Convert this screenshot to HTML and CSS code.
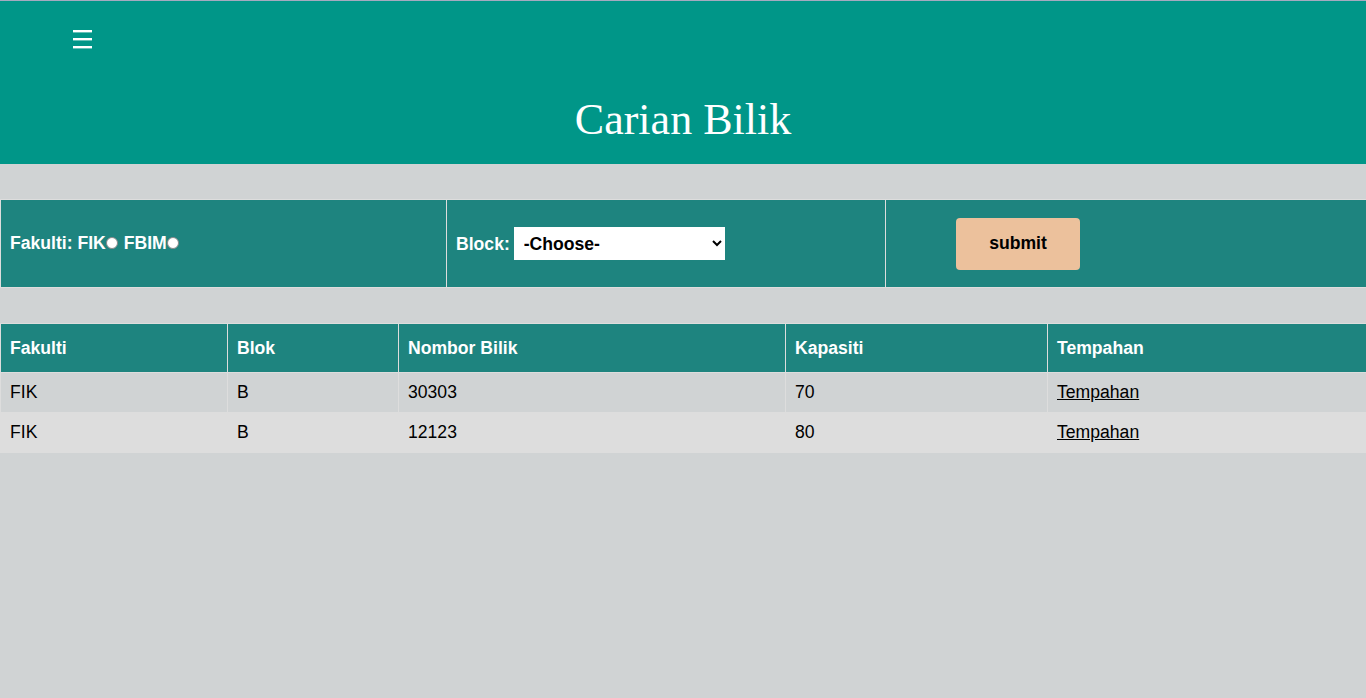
FILE: index.html
```html
<!DOCTYPE html>
<html lang="ms">
<head>
<meta charset="utf-8">
<title>Carian Bilik</title>
<link rel="stylesheet" href="styles.css">
</head>
<body>
<header class="topbar">
  <div class="menu-row">
    <svg class="menu-icon" width="19" height="19" viewBox="0 0 19 19" aria-hidden="true">
      <rect x="0" y="0" width="19" height="2.4" fill="#fff"/>
      <rect x="0" y="8" width="19" height="2.4" fill="#fff"/>
      <rect x="0" y="16" width="19" height="2.4" fill="#fff"/>
    </svg>
  </div>
  <h1 class="title">Carian Bilik</h1>
</header>

<form class="search-form">
  <table class="form-table">
    <colgroup>
      <col class="fc1"><col class="fc2"><col class="fc3">
    </colgroup>
    <tr>
      <td class="fcell">Fakulti: FIK<input class="radio" type="radio" name="fakulti" value="FIK"> FBIM<input class="radio" type="radio" name="fakulti" value="FBIM"></td>
      <td class="fcell">Block: <select class="block-select"><option>-Choose-</option><option>A</option><option>B</option></select></td>
      <td class="fcell"><button class="submit-btn" type="button">submit</button></td>
    </tr>
  </table>
</form>

<table class="data-table">
  <colgroup>
    <col class="dc1"><col class="dc2"><col class="dc3"><col class="dc4"><col class="dc5">
  </colgroup>
  <tr>
    <th>Fakulti</th><th>Blok</th><th>Nombor Bilik</th><th>Kapasiti</th><th>Tempahan</th>
  </tr>
  <tr>
    <td>FIK</td><td>B</td><td>30303</td><td>70</td><td><a href="#">Tempahan</a></td>
  </tr>
  <tr class="alt">
    <td>FIK</td><td>B</td><td>12123</td><td>80</td><td><a href="#">Tempahan</a></td>
  </tr>
</table>
</body>
</html>
```

FILE: styles.css
```css
html, body {
  margin: 0;
  padding: 0;
}

body {
  background: #d0d3d4;
  font-family: "Liberation Sans", Arial, sans-serif;
  font-size: 17.6px;
  color: #000;
  min-height: 698px;
}

.topbar {
  background: #009688;
  border-top: 1px solid #a5aac0;
  padding: 29px 0 19px;
  color: #fff;
}

.menu-row {
  display: flex;
  padding-left: 73px;
}

.menu-icon {
  display: block;
}

.title {
  margin: 46px 0 0;
  font-family: "Liberation Serif", "Times New Roman", serif;
  font-weight: normal;
  font-size: 44px;
  line-height: 50px;
  text-align: center;
}

.search-form {
  margin: 35px 0 0;
}

.form-table,
.data-table {
  width: 1366px;
  border-collapse: collapse;
  table-layout: fixed;
}

.fc1 { width: 446px; }
.fc2 { width: 439px; }
.fc3 { width: 481px; }

.fcell {
  background: #1e847f;
  border: 1px solid #dddddd;
  color: #fff;
  font-weight: bold;
  height: 87px;
  padding: 0 9px;
  vertical-align: middle;
}

.radio {
  appearance: none;
  -webkit-appearance: none;
  width: 12px;
  height: 12px;
  margin: 0 1px 0 0;
  border: 1px solid #8a8a8a;
  border-radius: 50%;
  background: #fff;
  vertical-align: 0;
  box-sizing: border-box;
}

.block-select {
  width: 211px;
  height: 33px;
  margin-left: -1px;
  padding: 0 6px;
  border: none;
  border-radius: 0;
  background-color: #fff;
  font-family: "Liberation Sans", Arial, sans-serif;
  font-size: 17.6px;
  font-weight: bold;
  color: #000;
}

.submit-btn {
  display: block;
  margin-left: 61px;
  width: 124px;
  height: 52px;
  border: none;
  border-radius: 4px;
  background: #ecc19c;
  font-family: "Liberation Sans", Arial, sans-serif;
  font-size: 17.6px;
  font-weight: bold;
  color: #000;
}

.data-table {
  margin-top: 35px;
}

.dc1 { width: 227px; }
.dc2 { width: 171px; }
.dc3 { width: 387px; }
.dc4 { width: 262px; }
.dc5 { width: 319px; }

.data-table th,
.data-table td {
  border: 1px solid #dddddd;
  text-align: left;
}

.data-table th {
  background: #1e847f;
  color: #fff;
  font-weight: bold;
  height: 49px;
  box-sizing: border-box;
  padding: 0 9px;
}

.data-table td {
  height: 40px;
  box-sizing: border-box;
  padding: 0 9px;
}

.data-table tr.alt td {
  background: #dddddd;
}

.data-table a {
  color: #000;
  text-decoration: underline;
}
```
